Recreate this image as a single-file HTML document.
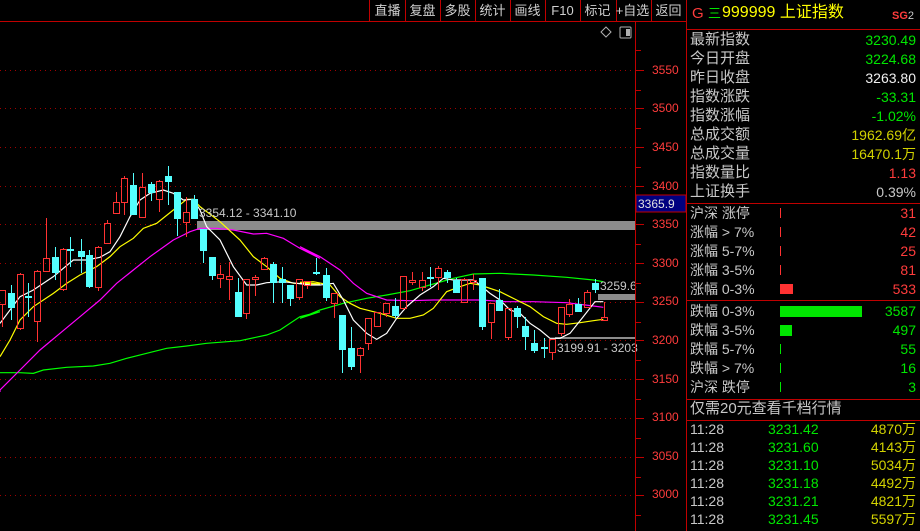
<!DOCTYPE html>
<html><head><meta charset="utf-8">
<style>
*{margin:0;padding:0;box-sizing:border-box}
body{width:920px;height:531px;background:#000;overflow:hidden;position:relative;font-family:"Liberation Sans","Noto Sans CJK SC",sans-serif}
.t{position:absolute;white-space:nowrap;line-height:16px;font-size:14px}
.lab{color:#c8c8c8;left:690px}
.val{right:4px;text-align:right}
.g{color:#00e600}.r{color:#ff3c3c}.w{color:#f0f0f0}.y{color:#d2d200}.gy{color:#c8c8c8}.yl{color:#ffff00}
.btn{position:absolute;top:3px;color:#d0d0d0;font-size:13px;line-height:16px;width:35px;text-align:center}
.hl{position:absolute;height:1px;background:#c00000}
.vl{position:absolute;width:1px;background:#c00000}
</style></head><body>
<svg width="920" height="531" style="position:absolute;left:0;top:0" id="s">
<g id="grid" stroke="#a00000" stroke-dasharray="1,4"></g>
<g id="ticks" stroke="#c00000"></g>
<rect x="197" y="221" width="438" height="9" fill="#8c8c8c"/>
<rect x="598" y="294" width="37" height="6" fill="#8c8c8c"/>
<rect x="555" y="337" width="80" height="2" fill="#8c8c8c"/>
<g fill="none" stroke-width="1.2" id="ma"></g>
<g id="cd"></g>
<text x="199" y="217" fill="#c8c8c8" font-size="12" font-family="Liberation Sans">3354.12 - 3341.10</text>
<text x="600" y="290" fill="#c8c8c8" font-size="12" font-family="Liberation Sans">3259.6</text>
<text x="557" y="352" fill="#c8c8c8" font-size="12" font-family="Liberation Sans">3199.91 - 3203</text>
<g fill="#ff3c3c" font-size="12" font-family="Liberation Sans">
<text x="652" y="74">3550</text><text x="652" y="112">3500</text><text x="652" y="151">3450</text><text x="652" y="190">3400</text><text x="652" y="228">3350</text><text x="652" y="267">3300</text><text x="652" y="305">3250</text><text x="652" y="344">3200</text><text x="652" y="383">3150</text><text x="652" y="421">3100</text><text x="652" y="460">3050</text><text x="652" y="498">3000</text>
</g>
<rect x="636" y="195" width="50" height="17" fill="#000080" stroke="#c00000"/>
<text x="638" y="208" fill="#e0e0e0" font-size="12" font-family="Liberation Sans">3365.9</text>
<path d="M606 27 L611 32 L606 37 L601 32 Z" fill="none" stroke="#b0b0b0"/>
<rect x="620" y="27" width="11" height="11" fill="none" stroke="#b0b0b0" rx="1"/>
<rect x="626" y="29" width="4" height="7" fill="#b0b0b0"/>
<rect x="780" y="284" width="13" height="10" fill="#ff3232"/>
<rect x="780" y="306" width="82" height="11" fill="#00e600"/>
<rect x="780" y="325" width="12" height="11" fill="#00e600"/>
<g stroke="#ff3232"><line x1="780.5" y1="208" x2="780.5" y2="218"/><line x1="780.5" y1="227" x2="780.5" y2="237"/><line x1="780.5" y1="246" x2="780.5" y2="256"/><line x1="780.5" y1="265" x2="780.5" y2="275"/></g>
<g stroke="#00e600"><line x1="780.5" y1="344" x2="780.5" y2="354"/><line x1="780.5" y1="363" x2="780.5" y2="373"/><line x1="780.5" y1="382" x2="780.5" y2="392"/></g>
</svg>
<div class="hl" style="left:0;top:21px;width:686px"></div>
<div class="vl" style="left:635px;top:21px;height:510px"></div>
<div class="vl" style="left:686px;top:0;height:531px"></div>
<div class="vl" style="left:369px;top:0;height:21px"></div>
<div class="vl" style="left:405px;top:0;height:21px"></div>
<div class="vl" style="left:440px;top:0;height:21px"></div>
<div class="vl" style="left:475px;top:0;height:21px"></div>
<div class="vl" style="left:510px;top:0;height:21px"></div>
<div class="vl" style="left:545px;top:0;height:21px"></div>
<div class="vl" style="left:580px;top:0;height:21px"></div>
<div class="vl" style="left:616px;top:0;height:21px"></div>
<div class="vl" style="left:651px;top:0;height:21px"></div>
<div class="btn" style="left:370px">直播</div>
<div class="btn" style="left:405px">复盘</div>
<div class="btn" style="left:440px">多股</div>
<div class="btn" style="left:475px">统计</div>
<div class="btn" style="left:510px">画线</div>
<div class="btn" style="left:545px">F10</div>
<div class="btn" style="left:580px">标记</div>
<div class="btn" style="left:615px">+自选</div>
<div class="btn" style="left:651px">返回</div>

<div class="hl" style="left:686px;top:29px;width:234px"></div>
<div class="hl" style="left:686px;top:203px;width:234px"></div>
<div class="hl" style="left:686px;top:300px;width:234px"></div>
<div class="hl" style="left:686px;top:399px;width:234px"></div>
<div class="hl" style="left:686px;top:420px;width:234px"></div>

<div class="t r" style="left:692px;top:6px;font-size:15px">G</div>
<div class="t g" style="left:708px;top:6px;font-size:13px">三</div>
<div class="t yl" style="left:722px;top:5px;font-size:16px">999999 上证指数</div>
<div class="t r" style="left:892px;top:8px;font-size:11px;font-weight:bold">SG<span style="color:#c8c8c8;font-weight:normal">2</span></div>

<div class="t lab" style="top:32px;font-size:15px">最新指数</div><div class="t val g" style="top:32px">3230.49</div>
<div class="t lab" style="top:51px;font-size:15px">今日开盘</div><div class="t val g" style="top:51px">3224.68</div>
<div class="t lab" style="top:70px;font-size:15px">昨日收盘</div><div class="t val w" style="top:70px">3263.80</div>
<div class="t lab" style="top:89px;font-size:15px">指数涨跌</div><div class="t val g" style="top:89px">-33.31</div>
<div class="t lab" style="top:108px;font-size:15px">指数涨幅</div><div class="t val g" style="top:108px">-1.02%</div>
<div class="t lab" style="top:127px;font-size:15px">总成交额</div><div class="t val y" style="top:127px">1962.69亿</div>
<div class="t lab" style="top:146px;font-size:15px">总成交量</div><div class="t val y" style="top:146px">16470.1万</div>
<div class="t lab" style="top:165px;font-size:15px">指数量比</div><div class="t val r" style="top:165px">1.13</div>
<div class="t lab" style="top:184px;font-size:15px">上证换手</div><div class="t val gy" style="top:184px">0.39%</div>

<div class="t lab" style="top:205px">沪深 涨停</div><div class="t val r" style="top:205px">31</div>
<div class="t lab" style="top:224px">涨幅 &gt; 7%</div><div class="t val r" style="top:224px">42</div>
<div class="t lab" style="top:243px">涨幅 5-7%</div><div class="t val r" style="top:243px">25</div>
<div class="t lab" style="top:262px">涨幅 3-5%</div><div class="t val r" style="top:262px">81</div>
<div class="t lab" style="top:281px">涨幅 0-3%</div><div class="t val r" style="top:281px">533</div>
<div class="t lab" style="top:303px">跌幅 0-3%</div><div class="t val g" style="top:303px">3587</div>
<div class="t lab" style="top:322px">跌幅 3-5%</div><div class="t val g" style="top:322px">497</div>
<div class="t lab" style="top:341px">跌幅 5-7%</div><div class="t val g" style="top:341px">55</div>
<div class="t lab" style="top:360px">跌幅 &gt; 7%</div><div class="t val g" style="top:360px">16</div>
<div class="t lab" style="top:379px">沪深 跌停</div><div class="t val g" style="top:379px">3</div>

<div class="t lab" style="top:401px;font-size:15px">仅需20元查看千档行情</div>

<div class="t lab" style="top:421px">11:28</div><div class="t g" style="left:768px;top:421px">3231.42</div><div class="t val y" style="top:421px">4870万</div>
<div class="t lab" style="top:439px">11:28</div><div class="t g" style="left:768px;top:439px">3231.60</div><div class="t val y" style="top:439px">4143万</div>
<div class="t lab" style="top:457px">11:28</div><div class="t g" style="left:768px;top:457px">3231.10</div><div class="t val y" style="top:457px">5034万</div>
<div class="t lab" style="top:475px">11:28</div><div class="t g" style="left:768px;top:475px">3231.18</div><div class="t val y" style="top:475px">4492万</div>
<div class="t lab" style="top:493px">11:28</div><div class="t g" style="left:768px;top:493px">3231.21</div><div class="t val y" style="top:493px">4821万</div>
<div class="t lab" style="top:511px">11:28</div><div class="t g" style="left:768px;top:511px">3231.45</div><div class="t val y" style="top:511px">5597万</div>

<script>
var NS="http://www.w3.org/2000/svg";
function el(p,n,a){var e=document.createElementNS(NS,n);for(var k in a)e.setAttribute(k,a[k]);p.appendChild(e);return e;}
var grid=document.getElementById('grid'),ticks=document.getElementById('ticks');
for(var i=0;i<12;i++){var y=69.5+i*38.7;y=Math.round(y)+0.5;el(grid,'line',{x1:0,y1:y,x2:635,y2:y});el(ticks,'line',{x1:636,y1:y,x2:644,y2:y});el(ticks,'line',{x1:636,y1:Math.round(y+19.35)+0.5,x2:641,y2:Math.round(y+19.35)+0.5});}
el(ticks,'line',{x1:636,y1:50.5,x2:641,y2:50.5});
var C=[['r',2,290,304,290,327],['c',11,293,308,285,320],['r',20,274,328,273,330],['c',28,296,298,283,317],['r',37,271,321,270,342],['r',46,258,271,218,271],['c',55,257,273,247,280],['r',63,249,289,248,291],['c',70,249,251,237,267],['c',81,251,257,239,273],['c',89,255,287,250,288],['r',98,247,287,246,291],['r',107,223,243,220,243],['r',116,202,213,192,213],['r',124,178,202,176,215],['c',133,185,215,173,215],['r',142,187,217,173,217],['c',151,184,193,182,201],['r',159,181,199,180,212],['c',168,176,182,166,205],['c',177,192,219,192,236],['r',186,212,222,197,237],['c',194,199,219,195,219],['c',203,229,251,229,263],['c',212,257,276,257,280],['r',220,274,278,265,288],['r',229,276,279,262,300],['c',238,292,317,278,317],['r',246,279,313,279,319],['r',255,277,279,275,296],['r',264,258,269,257,270],['c',273,264,283,262,303],['c',282,279,283,267,303],['c',290,285,299,285,306],['r',299,279,297,279,300],['r',307,281,285,281,289],['c',316,272,274,258,275],['c',326,275,298,268,301],['r',334,293,303,293,318],['c',342,315,350,315,373],['c',351,348,367,327,370],['r',360,348,355,347,373],['r',368,318,343,318,350],['r',377,312,326,312,327],['r',386,303,313,303,317],['c',395,306,316,298,318],['r',403,276,308,276,310],['r',412,280,282,272,285],['r',422,280,287,272,291],['c',430,277,279,267,287],['r',438,268,277,266,290],['c',447,272,278,270,283],['c',456,280,293,278,293],['r',464,279,302,278,302],['r',473,280,282,274,290],['c',482,278,327,278,330],['r',491,303,322,303,339],['c',499,300,311,289,311],['r',508,308,337,308,340],['c',517,308,317,306,328],['c',525,326,337,317,350],['c',534,343,351,330,353],['c',544,347,349,338,358],['r',552,339,352,339,360],['r',561,307,333,307,336],['r',569,304,314,299,317],['c',578,304,312,298,312],['r',587,292,307,290,308],['c',595,283,290,279,293],['r',604,317,320,302,320]];
var cd=document.getElementById('cd');
C.forEach(function(c){var x=c[1],red=c[0]=='r',col=red?'#ff3232':'#54ffff';
 if(red){el(cd,'line',{x1:x+.5,y1:c[4],x2:x+.5,y2:c[2],stroke:col});el(cd,'line',{x1:x+.5,y1:c[3],x2:x+.5,y2:c[5],stroke:col});
  el(cd,'rect',{x:x-2.5,y:c[2]+.5,width:6,height:Math.max(c[3]-c[2],1),fill:'none',stroke:col});}
 else{el(cd,'line',{x1:x+.5,y1:c[4],x2:x+.5,y2:c[5],stroke:col});el(cd,'rect',{x:x-3,y:c[2],width:7,height:Math.max(c[3]-c[2],1),fill:col});}
});
function pts(a,b){var o=[];a.forEach(function(p){o.push((p[0]/3)+','+(p[1]/3+160));});b.forEach(function(p){o.push((p[0]/3+300)+','+(p[1]/3+230));});return o.join(' ');}
var ma=document.getElementById('ma');
el(ma,'polyline',{stroke:'#00ff00',points:'0,373 '+pts([[0,638],[60,638],[100,640],[130,630],[200,622],[280,618],[330,610],[380,595],[440,580],[500,565],[560,558],[620,550],[720,542],[800,525],[840,510],[900,470],[960,455]],[[0,265],[60,240],[130,220],[200,205],[260,195],[330,182],[400,162],[460,145],[520,132],[600,130],[700,135],[800,142],[880,150],[910,155]])});
el(ma,'polyline',{stroke:'#ff00ff',points:'0,392 '+pts([[0,690],[60,630],[120,570],[180,520],[240,470],[300,420],[350,370],[400,330],[450,290],[520,240],[570,215],[600,205],[650,205],[700,210],[760,222],[800,220],[850,235],[900,265],[960,295]],[[0,50],[60,80],[120,120],[160,160],[200,190],[260,210],[330,212],[400,210],[460,210],[540,210],[620,215],[700,215],[800,218],[880,228],[910,232]])});
el(ma,'polyline',{stroke:'#ffff00',points:pts([[0,590],[30,540],[60,480],[100,440],[160,400],[200,370],[240,345],[290,320],[330,290],[360,260],[400,235],[430,205],[470,190],[520,150],[560,118],[580,118],[600,140],[660,185],[720,240],[760,290],[800,320],[840,355],[880,370],[960,372]],[[0,157],[40,155],[90,165],[120,200],[150,220],[180,235],[240,250],[290,265],[330,265],[370,255],[400,235],[440,185],[480,170],[510,160],[540,165],[600,185],[650,210],[690,230],[730,260],[770,280],[800,283],[840,278],[880,272],[910,268]])});
el(ma,'polyline',{stroke:'#ffffff',points:pts([[0,490],[60,410],[100,390],[160,350],[220,300],[260,300],[300,292],[330,275],[360,230],[390,170],[420,120],[450,100],[490,90],[520,100],[550,120],[580,118],[600,150],[620,200],[660,240],[700,320],[740,375],[770,375],[800,368],[850,365],[890,370],[930,375]],[[0,160],[30,165],[60,165],[100,160],[130,210],[160,270],[200,310],[230,328],[260,310],[290,265],[320,230],[360,195],[400,170],[430,145],[460,150],[520,150],[540,165],[570,190],[600,210],[630,240],[660,250],[690,280],[720,300],[750,325],[780,325],[810,310],[850,260],[885,215],[910,215]])});
</script>
</body></html>
